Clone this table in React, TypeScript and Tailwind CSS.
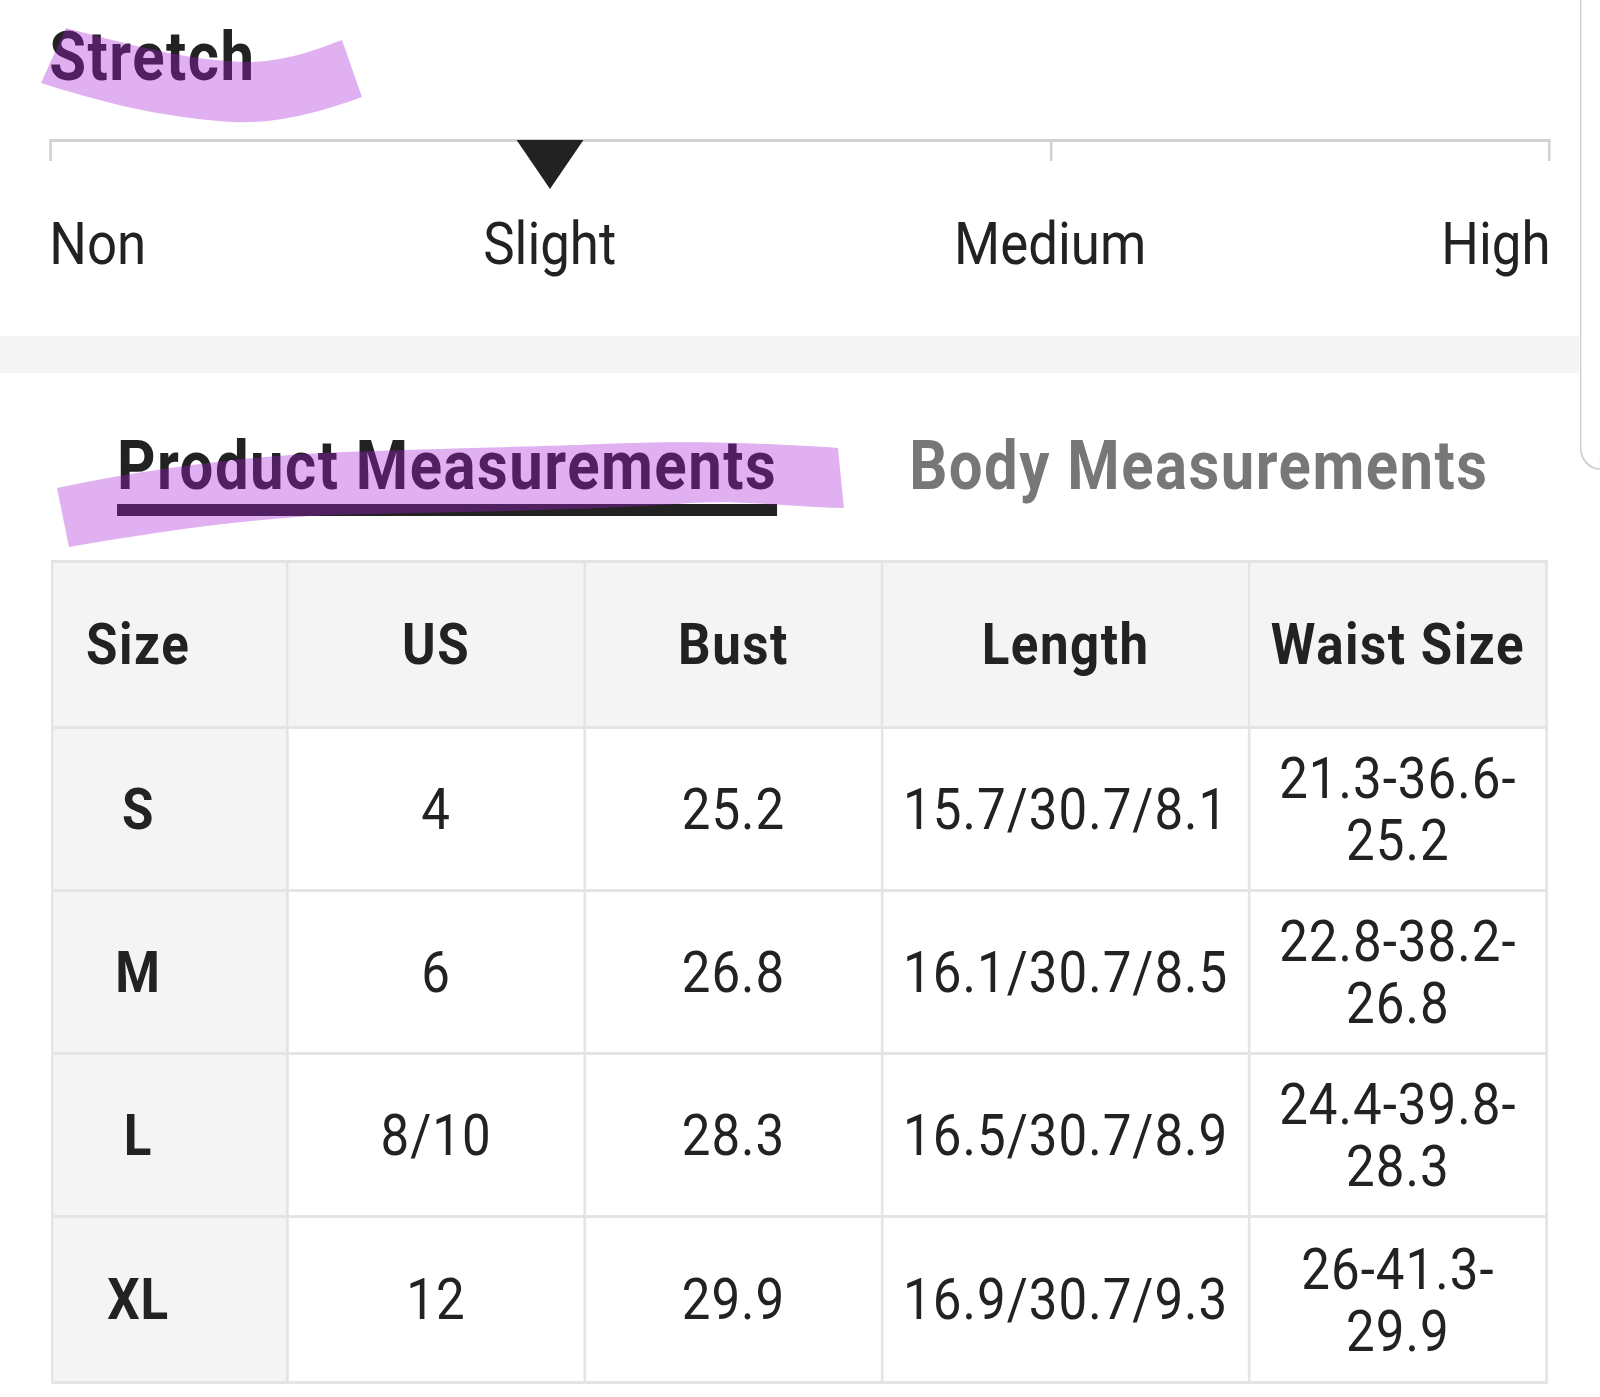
import React from 'react'

interface SizeRow {
  size: string
  us: string
  bust: string
  length: string
  waist: string[]
}

const rows: SizeRow[] = [
  { size: 'S', us: '4', bust: '25.2', length: '15.7/30.7/8.1', waist: ['21.3-36.6-', '25.2'] },
  { size: 'M', us: '6', bust: '26.8', length: '16.1/30.7/8.5', waist: ['22.8-38.2-', '26.8'] },
  { size: 'L', us: '8/10', bust: '28.3', length: '16.5/30.7/8.9', waist: ['24.4-39.8-', '28.3'] },
  { size: 'XL', us: '12', bust: '29.9', length: '16.9/30.7/9.3', waist: ['26-41.3-', '29.9'] },
]

const headers = ['Size', 'US', 'Bust', 'Length', 'Waist Size']

// the screenshot is squeezed sideways, so the page is laid out wider and scaled back
const App = () => {
  return (
    <div className="w-[1600px] min-h-[1397px] overflow-hidden bg-white">
      <div className="relative flex w-[1818px] h-[1397px] origin-top-left scale-x-[0.88] font-['Roboto','Liberation_Sans',sans-serif] text-[#222]">
        <main className="w-[1795px]">
          {/* stretch */}
          <section className="pl-[56px] pr-[33px] pt-[23px] pb-[62px]">
            <h2 className="text-[68px] leading-none font-bold tracking-[0.025em] h-[68px]">Stretch</h2>
            <div className="mt-[48px] grid grid-cols-3 grid-rows-[19px] h-[22px] border-t-[3px] border-[#d2d2d2]">
              <div className="border-l-[3px] border-[#d2d2d2]" />
              <div className="h-[19px]">
                <svg className="block -ml-[38px] -mt-[2px] w-[76px] h-[49px]" viewBox="0 0 76 49">
                  <polygon points="0,0 76,0 38,49" fill="#222" />
                </svg>
              </div>
              <div className="border-x-[3px] border-[#d2d2d2]" />
            </div>
            <div className="mt-[53px] grid grid-cols-[1fr_2fr_2fr_1fr] text-[60px] leading-none">
              <span className="text-left">Non</span>
              <span className="text-center">Slight</span>
              <span className="text-center">Medium</span>
              <span className="text-right">High</span>
            </div>
          </section>

          <div className="h-[37px] bg-[#f5f5f5]" />

          {/* tabs */}
          <div className="pl-[56px] pr-[33px] pt-[59px]">
            <div className="flex items-start">
              <div className="ml-[77px]">
                <div className="text-[68px] leading-none font-bold tracking-[0.025em] h-[68px] whitespace-nowrap">
                  Product Measurements
                </div>
                <div className="mt-[4px] h-[12px] bg-[#222]" />
              </div>
              <div className="ml-[150px] text-[68px] leading-none font-bold tracking-[0.025em] text-[#777] whitespace-nowrap">
                Body Measurements
              </div>
            </div>

            {/* table */}
            <div className="mt-[44px] ml-[2px] mr-[3px] grid grid-cols-[267px_338px_338px_417px_1fr] border-t-[3px] border-l-[3px] border-[#e4e4e4] text-[58px] tracking-[0.02em]">
              {headers.map((h, i) => (
                <div
                  key={h}
                  className={`h-[166px] flex items-center justify-center border-r-[3px] border-b-[3px] border-[#e4e4e4] bg-[#f4f4f4] font-bold tracking-[0.03em] whitespace-nowrap ${
                    i === 0 ? 'pr-[72px]' : ''
                  }`}
                >
                  {h}
                </div>
              ))}
              {rows.map((r, idx) => {
                const h = idx === rows.length - 1 ? 'h-[166px]' : 'h-[163px]'
                return (
                  <React.Fragment key={r.size}>
                    <div className={`${h} flex items-center justify-center pr-[72px] border-r-[3px] border-b-[3px] border-[#e4e4e4] bg-[#f4f4f4] font-bold`}>
                      {r.size}
                    </div>
                    <div className={`${h} flex items-center justify-center border-r-[3px] border-b-[3px] border-[#e4e4e4]`}>
                      {r.us}
                    </div>
                    <div className={`${h} flex items-center justify-center border-r-[3px] border-b-[3px] border-[#e4e4e4]`}>
                      {r.bust}
                    </div>
                    <div className={`${h} flex items-center justify-center border-r-[3px] border-b-[3px] border-[#e4e4e4] whitespace-nowrap`}>
                      {r.length}
                    </div>
                    <div className={`${h} flex flex-col items-center justify-center border-r-[3px] border-b-[3px] border-[#e4e4e4] leading-[62px]`}>
                      {r.waist.map((line) => (
                        <span key={line}>{line}</span>
                      ))}
                    </div>
                  </React.Fragment>
                )
              })}
            </div>
          </div>
        </main>

        {/* edge of the next panel */}
        <div className="flex-1 h-[470px] border-l-2 border-b-2 border-[#cfcfcf] rounded-bl-[26px]" />

        {/* marker highlights */}
        <svg
          className="absolute left-0 top-0 w-[1818px] h-[1397px] pointer-events-none"
          viewBox="0 0 1600 1397"
          preserveAspectRatio="none"
        >
          <path
            d="M 66 28 C 120 42, 190 62, 250 62 C 290 61, 320 48, 342 40 L 362 97 C 320 112, 280 124, 232 122 C 160 118, 95 100, 41 83 Z"
            fill="rgb(166,29,212)"
            fillOpacity="0.35"
          />
          <path
            d="M 57 488 C 140 470, 250 455, 344 452 C 460 448, 560 446, 600 444 C 700 440, 780 444, 838 448 L 844 508 C 780 506, 740 500, 690 503 C 600 510, 460 512, 330 515 C 230 520, 140 535, 69 547 Z"
            fill="rgb(166,29,212)"
            fillOpacity="0.35"
          />
        </svg>
      </div>
    </div>
  )
}

export default App
